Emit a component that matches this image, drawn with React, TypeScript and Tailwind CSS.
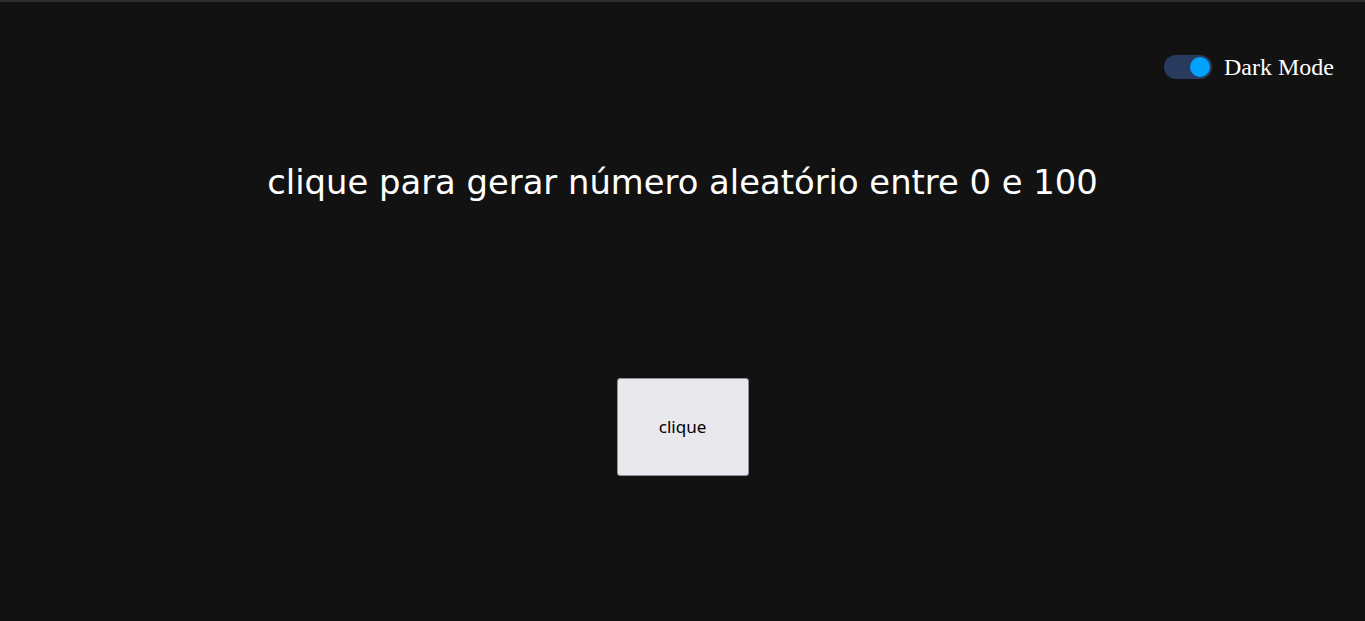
import React, { useState } from "react";

export default function App() {
  const [dark, setDark] = useState(true);
  const [n, setN] = useState<number | null>(null);
  return (
    <div className="min-h-[621px] w-full bg-[#121212] border-t-2 border-[#2c2c32] flex flex-col">
      <div className="flex justify-end items-center pt-[53px] pr-[31px] gap-3">
        <button
          onClick={() => setDark(!dark)}
          className="w-[48px] h-[24px] rounded-full bg-[#283a5e] flex items-center justify-end px-[2px]"
        >
          <span className="w-[20px] h-[20px] rounded-full bg-[#00a2ff] block" />
        </button>
        <span className="text-white text-[24px] leading-none" style={{ fontFamily: '"Liberation Serif", serif' }}>
          Dark Mode
        </span>
      </div>
      <h1
        className="text-white text-[33.8px] text-center mt-[87px] leading-none"
        style={{ fontFamily: '"DejaVu Sans", sans-serif' }}
      >
        clique para gerar número aleatório entre 0 e 100{n !== null ? "" : ""}
      </h1>
      <div className="flex justify-center mt-[178px]">
        <button
          onClick={() => setN(Math.floor(Math.random() * 101))}
          className="w-[132px] h-[98px] bg-[#e9e8ed] border border-[#8f8f9d] rounded-[3px] text-black text-[17px]"
          style={{ fontFamily: '"Noto Sans", sans-serif' }}
        >
          clique
        </button>
      </div>
    </div>
  );
}
